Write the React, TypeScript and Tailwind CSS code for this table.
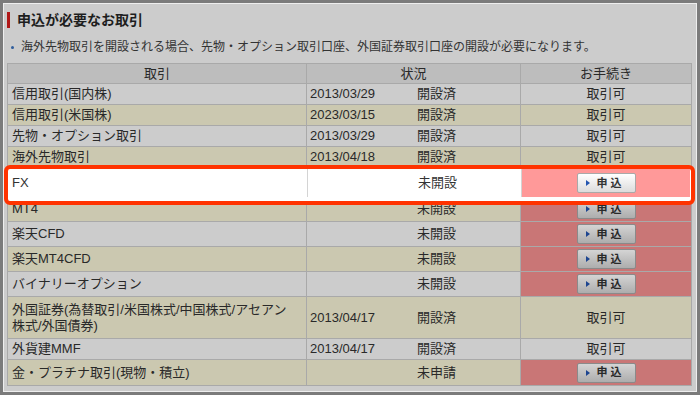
import React from "react";

type Row = {
  name: React.ReactNode;
  date: string;
  status: string;
  button: boolean;
  bg: string;
  h: string;
};

const rows: Row[] = [
  { name: "信用取引(国内株)", date: "2013/03/29", status: "開設済", button: false, bg: "bg-[#cccccc]", h: "h-[21px]" },
  { name: "信用取引(米国株)", date: "2023/03/15", status: "開設済", button: false, bg: "bg-[#cbc8b0]", h: "h-[21px]" },
  { name: "先物・オプション取引", date: "2013/03/29", status: "開設済", button: false, bg: "bg-[#cccccc]", h: "h-[21px]" },
  { name: "海外先物取引", date: "2013/04/18", status: "開設済", button: false, bg: "bg-[#cbc8b0]", h: "h-[21px]" },
  { name: "FX", date: "", status: "未開設", button: true, bg: "bg-[#cccccc]", h: "h-[29px]" },
  { name: "MT4", date: "", status: "未開設", button: true, bg: "bg-[#cbc8b0]", h: "h-[25px]" },
  { name: "楽天CFD", date: "", status: "未開設", button: true, bg: "bg-[#cccccc]", h: "h-[25px]" },
  { name: "楽天MT4CFD", date: "", status: "未開設", button: true, bg: "bg-[#cbc8b0]", h: "h-[25px]" },
  { name: "バイナリーオプション", date: "", status: "未開設", button: true, bg: "bg-[#cccccc]", h: "h-[25px]" },
  {
    name: (
      <>
        外国証券(為替取引/米国株式/中国株式/アセアン
        <br />
        株式/外国債券)
      </>
    ),
    date: "2013/04/17",
    status: "開設済",
    button: false,
    bg: "bg-[#cbc8b0]",
    h: "h-[42px]",
  },
  { name: "外貨建MMF", date: "2013/04/17", status: "開設済", button: false, bg: "bg-[#cccccc]", h: "h-[21px]" },
  { name: "金・プラチナ取引(現物・積立)", date: "", status: "未申請", button: true, bg: "bg-[#cbc8b0]", h: "h-[25px]" },
];

function ApplyButton({ lit }: { lit?: boolean }) {
  return (
    <div
      className={
        lit
          ? "flex h-[20px] w-[59px] items-center rounded-[2px] border border-[#a9a9a9] bg-linear-to-b from-[#ffffff] to-[#dcdcdc] pl-[8px]"
          : "flex h-[20px] w-[59px] items-center rounded-[2px] border border-[#8a8a8a] bg-linear-to-b from-[#d4d4d4] to-[#adadad] pl-[8px]"
      }
    >
      <svg width="4" height="6" viewBox="0 0 4 6" className="mr-[7px]">
        <polygon points="0,0 4,3 0,6" fill={lit ? "#2456b0" : "#1d4590"} />
      </svg>
      <span className={lit ? "text-[11px] font-bold leading-none tracking-[3px] text-[#333333]" : "text-[11px] font-bold leading-none tracking-[3px] text-[#292929]"}>
        申込
      </span>
    </div>
  );
}

export default function App() {
  return (
    <div
      className="relative h-[395px] w-[700px] overflow-hidden border-[3px] border-[#7b7b7b] text-[#292929]"
      style={{ fontFamily: '"Liberation Sans", "Noto Sans CJK JP", sans-serif' }}
    >
      <div className="h-full w-full border border-[#eeeeee] bg-[#cccccc] px-[3px] pt-[8px]">
        {/* title */}
        <div className="flex h-[16px] items-center">
          <div className="h-[16px] w-[3px] bg-[#b01818]" />
          <div className="ml-[7px] text-[14px] font-bold leading-none text-[#1e1e1e]">申込が必要なお取引</div>
        </div>
        {/* note */}
        <div className="mt-[11px] flex h-[16px] items-center">
          <span className="ml-[4px] h-[3px] w-[3px] rounded-full bg-[#2f5d9c]" />
          <span className="ml-[7px] text-[12px] leading-none text-[#333333]">
            海外先物取引を開設される場合、先物・オプション取引口座、外国証券取引口座の開設が必要になります。
          </span>
        </div>
        {/* table */}
        <div className="mt-[8px] w-[685px] border border-[#a9a9a9] text-[13px]">
          <div className="grid h-[20px] grid-cols-[299px_214px_170px] border-b border-[#a9a9a9] bg-[#bdbdbd]">
            <div className="flex items-center justify-center border-r border-[#a9a9a9]">取引</div>
            <div className="flex items-center justify-center border-r border-[#a9a9a9]">状況</div>
            <div className="flex items-center justify-center">お手続き</div>
          </div>
          {rows.map((r, i) => (
            <div
              key={i}
              className={`grid grid-cols-[299px_214px_170px] border-b border-[#a9a9a9] last:border-b-0 ${r.bg} ${r.h}`}
            >
              <div className="flex items-center border-r border-[#a9a9a9] pl-[4px] leading-[16px]">
                <div>{r.name}</div>
              </div>
              <div className="flex items-center border-r border-[#a9a9a9]">
                <span className="w-[110px] pl-[3px]">{r.date}</span>
                <span>{r.status}</span>
              </div>
              <div className={r.button ? "flex items-center justify-center bg-[#c97676]" : "flex items-center justify-center"}>
                {r.button ? <ApplyButton /> : "取引可"}
              </div>
            </div>
          ))}
        </div>
      </div>

      {/* highlighted FX row */}
      <div className="absolute left-[1px] top-[162px] h-[40px] w-[691px] rounded-[6px] border-[4px] border-[#ff3300] bg-white pb-[4px] pr-[1px] text-[13px] text-[#333333]">
        <div className="grid h-[28px] grid-cols-[300px_214px_168px]">
          <div className="flex items-center border-r border-[#d4d4d4] pl-[4px]">FX</div>
          <div className="flex items-center border-r border-[#d4d4d4]">
            <span className="w-[110px] pl-[3px]" />
            <span>未開設</span>
          </div>
          <div className="flex items-center justify-center bg-[#ff9999]">
            <ApplyButton lit />
          </div>
        </div>
      </div>
    </div>
  );
}
